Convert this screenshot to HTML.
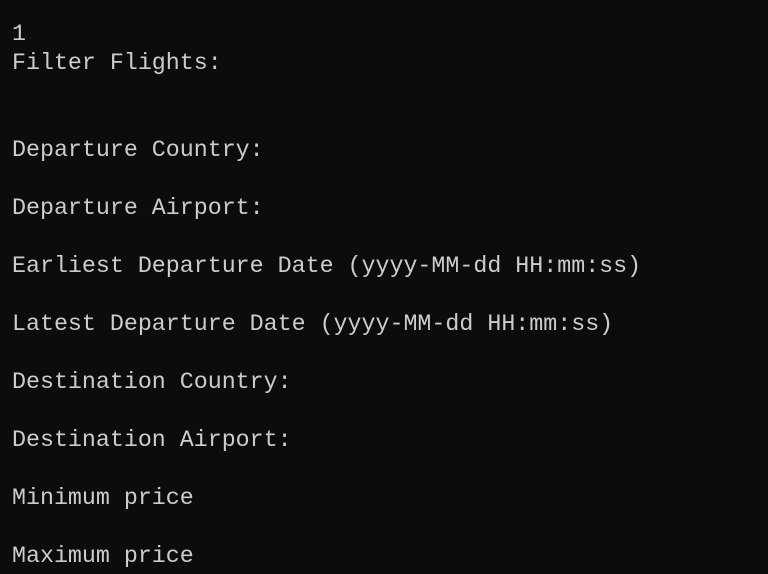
<!DOCTYPE html>
<html><head><meta charset="utf-8"><style>
html,body{margin:0;padding:0;background:#0c0c0c;width:768px;height:574px;overflow:hidden}
pre{margin:0;position:absolute;left:12px;top:20px;font-family:"Liberation Mono","DejaVu Sans Mono",monospace;font-size:23.3px;line-height:29px;color:#cccccc;}
</style></head><body><pre>1
Filter Flights:


Departure Country:

Departure Airport:

Earliest Departure Date (yyyy-MM-dd HH:mm:ss)

Latest Departure Date (yyyy-MM-dd HH:mm:ss)

Destination Country:

Destination Airport:

Minimum price

Maximum price</pre></body></html>
